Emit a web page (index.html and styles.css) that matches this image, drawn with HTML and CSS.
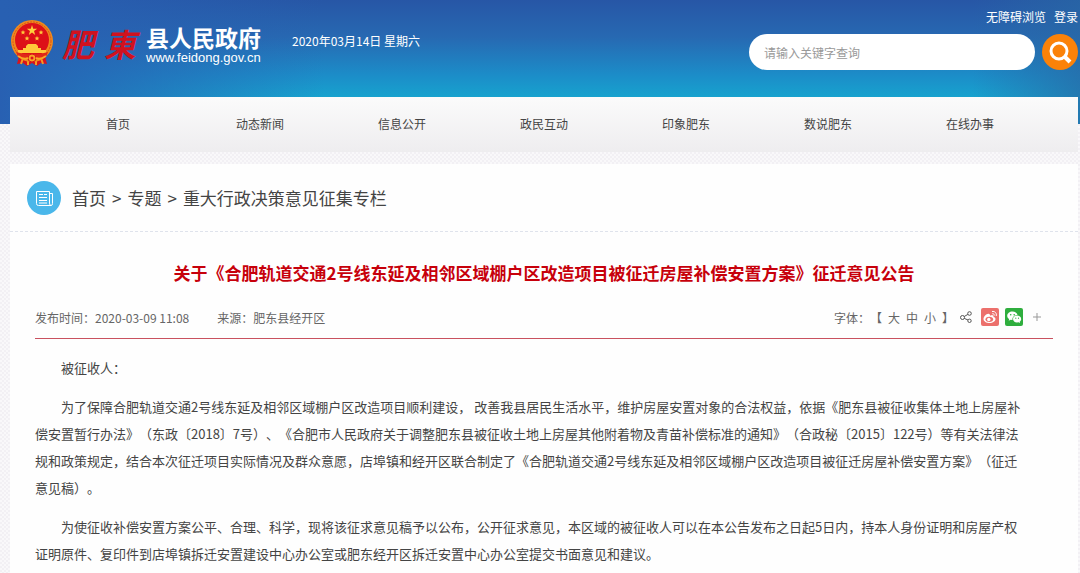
FILE: index.html
```html
<!DOCTYPE html>
<html lang="zh-CN">
<head>
    <meta charset="UTF-8">
    <meta name="viewport" content="width=device-width, initial-scale=1.0">
    <title>肥东县人民政府</title>
    <link rel="stylesheet" href="styles.css">
</head>
<body>

    <header class="header">
        <a class="logo" href="#">
            <svg class="emblem" viewBox="0 0 44 48" aria-hidden="true">
                <path d="M9 37 L7 45 L13 44 L17 47 L22 44 L27 47 L31 44 L37 45 L35 37 Z" fill="#d8141c"/>
                <path d="M13 39 L11 45 M31 39 L33 45 M18 41 V46 M26 41 V46" stroke="#f59a22" stroke-width="2"/>
                <circle cx="22" cy="22" r="21" fill="#f08a1c"/>
                <circle cx="22" cy="22" r="19" fill="none" stroke="#d9501a" stroke-width="1" stroke-dasharray="2 1"/>
                <circle cx="22" cy="21" r="17" fill="#dd1018"/>
                <path d="M22 6 L23.2 9.8 H27.2 L24 12.1 L25.2 16 L22 13.6 L18.8 16 L20 12.1 L16.8 9.8 H20.8 Z" fill="#ffd23c"/>
                <g fill="#ffc93a">
                    <path d="M13 11 l.7 1.6 1.7 .1 -1.3 1.1 .4 1.7 -1.5 -1 -1.5 1 .4 -1.7 -1.3 -1.1 1.7 -.1z"/>
                    <path d="M31 11 l.7 1.6 1.7 .1 -1.3 1.1 .4 1.7 -1.5 -1 -1.5 1 .4 -1.7 -1.3 -1.1 1.7 -.1z"/>
                    <path d="M17 17 l.7 1.6 1.7 .1 -1.3 1.1 .4 1.7 -1.5 -1 -1.5 1 .4 -1.7 -1.3 -1.1 1.7 -.1z"/>
                    <path d="M27 17 l.7 1.6 1.7 .1 -1.3 1.1 .4 1.7 -1.5 -1 -1.5 1 .4 -1.7 -1.3 -1.1 1.7 -.1z"/>
                    <path d="M16 27 L18 25 H26 L28 27 V29 H31 V31 H36 V34 H8 V31 H13 V29 H16 Z"/>
                </g>
                <path d="M6 33 Q22 38 38 33 L36 38 Q22 42 8 38 Z" fill="#e02818"/>
                <circle cx="22" cy="39" r="4" fill="#f7a526" stroke="#d8141c"/>
                <circle cx="22" cy="39" r="1.5" fill="#d8141c"/>
                <path d="M8 37 Q14 41 18 39 M36 37 Q30 41 26 39" fill="none" stroke="#f9a825" stroke-width="2"/>
            </svg>
            <span class="brush"><span>肥</span><span>東</span></span>
            <span class="site">
                <span class="site-name">县人民政府</span>
                <span class="site-url">www.feidong.gov.cn</span>
            </span>
        </a>
        <span class="date">2020年03月14日 星期六</span>
        <div class="tools">
            <div class="links">
                <a href="#">无障碍浏览</a>
                <a href="#">登录</a>
            </div>
            <form class="search">
                <input type="text" placeholder="请输入关键字查询" aria-label="请输入关键字查询">
                <button type="button" aria-label="搜索">
                    <svg viewBox="0 0 36 36" fill="none" stroke="#fff" stroke-width="3">
                        <circle cx="17" cy="17" r="8"/>
                        <path d="M23 23 L28 28" stroke-width="4"/>
                    </svg>
                </button>
            </form>
        </div>
    </header>

    <nav class="nav">
        <a href="#">首页</a>
        <a href="#">动态新闻</a>
        <a href="#">信息公开</a>
        <a href="#">政民互动</a>
        <a href="#">印象肥东</a>
        <a href="#">数说肥东</a>
        <a href="#">在线办事</a>
    </nav>

    <main class="content">
        <div class="crumbs">
            <svg viewBox="0 0 34 34" aria-hidden="true">
                <circle cx="17" cy="17" r="17" fill="#4ab7ea"/>
                <g fill="none" stroke="#fff">
                    <path d="M22.5 22 V10.500 H9.500 V22.500 Q9.500 24.500 11.500 24.500 H24 Q22.500 24.500 22.500 22 M22.500 12.500 H25.500 V22.500 Q25.500 24.500 24 24.500"/>
                    <path d="M12 13.500 H16 M12 16.500 H20 M12 19.500 H20 M12 22 H20 M17 13.500 H20"/>
                </g>
            </svg>
            <a href="#">首页</a>
            <span>&gt;</span>
            <a href="#">专题</a>
            <span>&gt;</span>
            <a href="#">重大行政决策意见征集专栏</a>
        </div>

        <article class="article">
            <h1>关于《合肥轨道交通2号线东延及相邻区域棚户区改造项目被征迁房屋补偿安置方案》征迁意见公告</h1>

            <div class="meta">
                <span>发布时间：2020-03-09 11:08</span>
                <span>来源：肥东县经开区</span>
                <div class="font-size">
                    <span>字体：【</span>
                    <button type="button">大</button>
                    <button type="button">中</button>
                    <button type="button">小</button>
                    <span>】</span>
                </div>
                <div class="share">
                    <a href="#" aria-label="分享">
                        <svg class="share-icon" viewBox="0 0 12 12" fill="none" stroke="#555">
                            <circle cx="2.500" cy="6.500" r="2"/>
                            <circle cx="9.500" cy="2.500" r="1.800"/>
                            <circle cx="9.500" cy="9.800" r="1.700"/>
                            <path d="M4.200 5.500 L7.900 3.400 M4.300 7.400 L8 9"/>
                        </svg>
                    </a>
                    <a href="#" aria-label="微博">
                        <svg viewBox="0 0 18 18">
                            <rect width="18" height="18" rx="2" fill="#ec706c"/>
                            <path d="M8 6 C6 5 2.500 8.500 2.500 11 C2.500 13.500 5.500 15 8.500 15 C12 15 14.500 13 14.500 11 C14.500 9.800 13.500 9.200 12.500 9 C13 7.500 11.500 6.800 9 7.800 C9.200 7 9 6.400 8 6 Z" fill="#fff"/>
                            <ellipse cx="8.300" cy="11.300" rx="3.800" ry="2.600" fill="#ec706c"/>
                            <circle cx="7.800" cy="11.500" r="1.700" fill="#fff"/>
                            <path d="M11 3.500 C14 3 16 5.300 15.200 8 M11.300 5.700 C12.800 5.500 13.500 6.500 13.200 7.600" fill="none" stroke="#fff"/>
                        </svg>
                    </a>
                    <a href="#" aria-label="微信">
                        <svg viewBox="0 0 18 18">
                            <rect width="18" height="18" rx="2" fill="#2fae3e"/>
                            <path d="M7.500 3.500 C4.500 3.500 2.200 5.400 2.200 7.800 C2.200 9.200 3 10.300 4.200 11.100 L3.700 12.700 L5.600 11.800 L7.500 12 C7 9 9.300 6.900 12.500 6.900 C12 5 10 3.500 7.500 3.500 Z" fill="#fff"/>
                            <path d="M12 7.600 C9.700 7.600 8 9.100 8 11 C8 12.900 9.700 14.400 12 14.400 L13.500 14.200 L15.100 15 L14.700 13.700 C15.600 13 16.200 12.100 16.200 11 C16.200 9.100 14.300 7.600 12 7.600 Z" fill="#fff"/>
                            <g fill="#2fae3e">
                                <circle cx="5.700" cy="6.700" r=".8"/>
                                <circle cx="9.200" cy="6.700" r=".8"/>
                                <circle cx="10.800" cy="10.200" r=".6"/>
                                <circle cx="13.500" cy="10.200" r=".6"/>
                            </g>
                        </svg>
                    </a>
                    <a href="#" aria-label="更多">
                        <svg class="more-icon" viewBox="0 0 10 10" fill="none" stroke="#999">
                            <path d="M1 5 H9 M5 1 V9"/>
                        </svg>
                    </a>
                </div>
            </div>

            <div class="text">
                <p>被征收人：</p>
                <p>为了保障合肥轨道交通2号线东延及相邻区域棚户区改造项目顺利建设， 改善我县居民生活水平，维护房屋安置对象的合法权益，依据《肥东县被征收集体土地上房屋补<br>偿安置暂行办法》（东政〔2018〕7号）、《合肥市人民政府关于调整肥东县被征收土地上房屋其他附着物及青苗补偿标准的通知》（合政秘〔2015〕122号）等有关法律法<br>规和政策规定，结合本次征迁项目实际情况及群众意愿，店埠镇和经开区联合制定了《合肥轨道交通2号线东延及相邻区域棚户区改造项目被征迁房屋补偿安置方案》（征迁<br>意见稿）。</p>
                <p>为使征收补偿安置方案公平、合理、科学，现将该征求意见稿予以公布，公开征求意见，本区域的被征收人可以在本公告发布之日起5日内，持本人身份证明和房屋产权<br>证明原件、复印件到店埠镇拆迁安置建设中心办公室或肥东经开区拆迁安置中心办公室提交书面意见和建议。</p>
            </div>
        </article>
    </main>

</body>
</html>
```

FILE: styles.css
```css
* {
    box-sizing: border-box;
}

body {
    margin: 0;
    min-height: 100vh;
    display: flex;
    flex-direction: column;
    font-family: 'Noto Sans CJK SC', sans-serif;
    font-size: 12px;
    color: #444;
    text-spacing-trim: space-all;
    background-color: #f7f6f8;
    background-image:
        linear-gradient(90deg, #2860b2 0%, rgba(40, 96, 178, 0) 30%),
        linear-gradient(270deg, rgba(40, 104, 165, 0.7) 0%, rgba(40, 120, 175, 0) 10%),
        linear-gradient(180deg, #2756a6 0%, #2769b2 30%, #1c8cc8 60%, #17a2ce 78%),
        conic-gradient(#f2f0f4 25%, #f9f8fa 0 50%, #f2f0f4 0 75%, #f9f8fa 0);
    background-size: 100% 124px, 100% 124px, 100% 124px, 4px 4px;
    background-repeat: no-repeat, no-repeat, no-repeat, repeat;
}

a {
    color: inherit;
    text-decoration: none;
}

button {
    border: none;
    padding: 0;
    background: none;
    font: inherit;
    color: inherit;
    cursor: pointer;
}

svg {
    display: block;
}

.header {
    height: 97px;
    padding: 0 2px 0 10px;
    display: flex;
    align-items: flex-start;
    color: #fff;
}

.logo {
    display: flex;
    margin-top: 19px;
}

.emblem {
    width: 44px;
    height: 48px;
}

.brush {
    display: flex;
    gap: 10px;
    margin: 0 10px 0 8px;
    font-size: 32px;
    font-weight: bold;
    font-style: italic;
    line-height: 48px;
    color: #d0121f;
}

.site {
    display: flex;
    flex-direction: column;
    padding-top: 5px;
}

.site-name {
    font-size: 23px;
    font-weight: bold;
    line-height: 26px;
}

.site-url {
    padding-top: 1px;
    font-family: 'Liberation Sans', sans-serif;
    font-size: 13px;
    line-height: 13px;
}

.date {
    margin: 32px 0 0 31px;
    line-height: 18px;
}

.tools {
    margin-left: auto;
}

.links {
    display: flex;
    justify-content: flex-end;
    gap: 8px;
    padding-top: 8px;
    line-height: 18px;
}

.search {
    display: flex;
    gap: 7px;
    margin-top: 8px;
}

.search input {
    width: 286px;
    height: 36px;
    padding: 0 15px;
    border: none;
    border-radius: 18px;
    background: #fff;
    font: inherit;
    color: #444;
}

.search input::placeholder {
    color: #999;
}

.search button {
    width: 36px;
    height: 36px;
    border-radius: 50%;
    background: #fb8209;
}

.nav {
    display: flex;
    height: 55px;
    margin: 0 2px 12px 10px;
    padding: 0 37px;
    background: linear-gradient(#fbfbfb, #eeedef);
}

.nav a {
    flex: 1;
    line-height: 54px;
    text-align: center;
}

.content {
    flex: 1;
    margin: 0 2px 0 10px;
    background: #fefefe;
}

.crumbs {
    display: flex;
    align-items: center;
    gap: 6px;
    height: 68px;
    padding-left: 17px;
    border-bottom: 1px dashed #dfe3ec;
    font-size: 17px;
}

.crumbs svg {
    width: 34px;
    height: 34px;
    margin-right: 5px;
}

.article {
    padding: 0 25px;
}

h1 {
    margin: 28px 0 0;
    font-size: 17px;
    line-height: 26px;
    text-align: center;
    color: #c7000b;
}

.meta {
    display: flex;
    align-items: center;
    gap: 28px;
    height: 53px;
    padding: 10px 11px 0 0;
    border-bottom: 1px solid #c9515f;
    color: #666;
}

.font-size {
    display: flex;
    gap: 6px;
    margin-left: auto;
}

.share {
    display: flex;
    align-items: center;
    gap: 6px;
    margin-left: -22px;
}

.share svg {
    width: 18px;
    height: 18px;
}

.share .share-icon {
    width: 12px;
    height: 12px;
    margin-right: 3px;
}

.share .more-icon {
    width: 10px;
    height: 10px;
    margin-left: 3px;
}

.text {
    padding-top: 15px;
    font-size: 13px;
    line-height: 27px;
}

.text p {
    margin: 0 0 12px;
    text-indent: 2em;
}

.text p:last-child {
    margin-bottom: 0;
}
```
